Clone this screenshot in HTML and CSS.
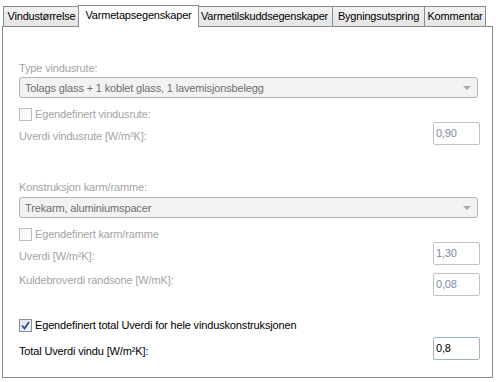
FILE: index.html
```html
<!DOCTYPE html>
<html lang="no">
<head>
 <meta charset="UTF-8">
 <title>Vindu</title>
 <link rel="stylesheet" href="styles.css">
</head>
<body>

<div class="tabs">
 <div class="tab" style="width:77px">Vindustørrelse</div>
 <div class="tab active" style="width:121px">Varmetapsegenskaper</div>
 <div class="tab" style="width:137px">Varmetilskuddsegenskaper</div>
 <div class="tab" style="width:93px">Bygningsutspring</div>
 <div class="tab" style="width:62px">Kommentar</div>
</div>

<div class="pane">

 <div class="lbl dis first">Type vindusrute:</div>
 <div class="combo">
  <span>Tolags glass + 1 koblet glass, 1 lavemisjonsbelegg</span>
  <span class="arrow"></span>
 </div>

 <div class="chk dis"><span class="box"></span>Egendefinert vindusrute:</div>

 <div class="row r1">
  <span class="dis lift3">Uverdi vindusrute [W/m²K]:</span>
  <span class="tb dis-val">0,90</span>
 </div>

 <div class="lbl dis sec">Konstruksjon karm/ramme:</div>
 <div class="combo c2">
  <span>Trekarm, aluminiumspacer</span>
  <span class="arrow"></span>
 </div>

 <div class="chk dis"><span class="box"></span>Egendefinert karm/ramme</div>

 <div class="row r1">
  <span class="dis lift3">Uverdi [W/m²K]:</span>
  <span class="tb dis-val">1,30</span>
 </div>

 <div class="row r2">
  <span class="dis up">Kuldebroverdi randsone [W/mK]:</span>
  <span class="tb dis-val">0,08</span>
 </div>

 <div class="chk on"><span class="box">
  <svg width="11" height="11" viewBox="0 0 11 11"><path d="M2 5.5 L4.5 8.5 L9 2" fill="none" stroke="#2d4f8f" stroke-width="1.8"/></svg>
 </span>Egendefinert total Uverdi for hele vinduskonstruksjonen</div>

 <div class="row r3">
  <span class="lift3">Total Uverdi vindu [W/m²K]:</span>
  <span class="tb live">0,8</span>
 </div>

</div>

</body>
</html>
```

FILE: styles.css
```css
body{
 margin: 0;
 background: #fff;
 font-family: "Liberation Sans", sans-serif;
 font-size: 11px;
 letter-spacing: -0.15px;
 color: #000;
 width: 500px;
 height: 382px;
 overflow: hidden;
}

.tabs{
 display: flex;
 align-items: flex-end;
 padding: 0 0 0 3px;
 height: 26px;
 letter-spacing: -0.2px;
}

.tab{
 box-sizing: border-box;
 height: 20px;
 border: 1px solid #898c95;
 border-bottom: none;
 margin-left: -1px;
 background: linear-gradient(#f2f2f2, #e4e4e4);
 display: flex;
 align-items: center;
 justify-content: center;
 padding-bottom: 1px;
 white-space: nowrap;
}
.tab:first-child{ margin-left: 0; }

.tab.active{
 position: relative;
 z-index: 2;
 height: 22px;
 margin: 0 -2px -1px -2px;
 background: #fff;
 padding-bottom: 3px;
}

.pane{
 box-sizing: border-box;
 margin-left: 2px;
 width: 491px;
 height: 352px;
 border: 1px solid #898c95;
 padding: 0 12px 0 16px;
 display: flex;
 flex-direction: column;
}

.dis{ color: #a3a3a3; }

.lbl{
 height: 16px;
 line-height: 16px;
}
.lbl.first{ margin-top: 33px; }
.lbl.sec{ margin-top: 35px; }

.combo{
 box-sizing: border-box;
 margin: 1px 2px 0 0;
 height: 21px;
 border: 1px solid #b4b4b4;
 border-radius: 3px;
 background: #f2f2f2;
 color: #6f6f6f;
 display: flex;
 align-items: center;
 justify-content: space-between;
 padding: 0 5px 0 5px;
}
.combo.c2{ margin-top: 2px; }

.arrow{
 width: 0;
 height: 0;
 border-left: 4px solid transparent;
 border-right: 4px solid transparent;
 border-top: 4px solid #a8a8a8;
 margin-right: 1px;
}

.chk{
 margin-top: 8px;
 height: 16px;
 display: flex;
 align-items: center;
 gap: 3px;
}

.box{
 box-sizing: border-box;
 width: 13px;
 height: 13px;
 border: 1px solid #bcbcbc;
 background: linear-gradient(135deg, #f4f4f4, #ffffff);
 display: flex;
 align-items: center;
 justify-content: center;
}
.chk.on{ margin-top: 22px; }
.chk.on .box{
 border-color: #8e8f8f;
 background: linear-gradient(135deg, #dce4ef, #f4f6fa);
}

.row{
 height: 22px;
 display: flex;
 justify-content: space-between;
 align-items: center;
}
.row.r2{ margin-top: 9px; }
.row.r3{ margin-top: 4px; }

.lift3{ margin-top: 6px; }
.up{ margin-top: -8px; }

.tb{
 box-sizing: border-box;
 width: 47px;
 height: 23px;
 border: 1px solid #c2c2c2;
 border-radius: 2px;
 padding: 0 2px;
 display: flex;
 align-items: center;
 background: #fff;
}
.dis-val{ color: #7e8aa6; }
.tb.live{
 border-color: #9fb3c8;
 color: #000;
}
```
